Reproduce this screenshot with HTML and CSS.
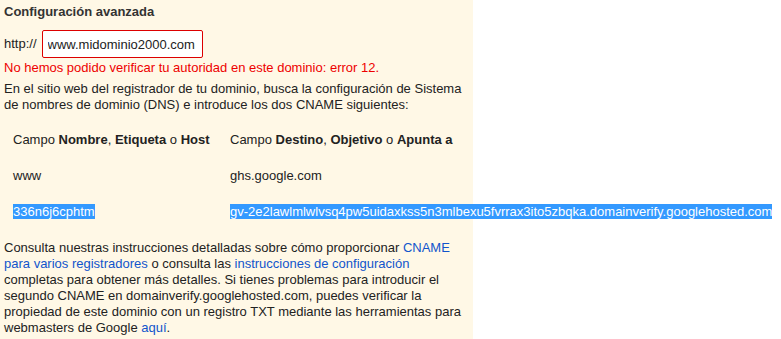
FILE: index.html
```html
<!DOCTYPE html>
<html lang="es">
<head>
    <meta charset="UTF-8">
    <title>Configuración avanzada</title>
    <link rel="stylesheet" href="styles.css">
</head>
<body>

    <div class="panel">
        <h3 class="panel-title">Configuración avanzada</h3>

        <div class="domain-row">
            <span class="prefix">http://</span>
            <input type="text" class="domain-input error" value="www.midominio2000.com">
        </div>
        <div class="error-message">No hemos podido verificar tu autoridad en este dominio: error 12.</div>

        <p class="intro">En el sitio web del registrador de tu dominio, busca la configuración de Sistema de nombres de dominio (DNS) e introduce los dos CNAME siguientes:</p>

        <!-- CNAME records -->
        <div class="cname-table">
            <div>Campo <b>Nombre</b>, <b>Etiqueta</b> o <b>Host</b></div>
            <div>Campo <b>Destino</b>, <b>Objetivo</b> o <b>Apunta a</b></div>

            <div>www</div>
            <div>ghs.google.com</div>

            <div><span class="selected">336n6j6cphtm</span></div>
            <div><span class="selected">gv-2e2lawlmlwlvsq4pw5uidaxkss5n3mlbexu5fvrrax3ito5zbqka.domainverify.googlehosted.com</span></div>
        </div>

        <p class="details">Consulta nuestras instrucciones detalladas sobre cómo proporcionar <a href="#">CNAME para varios registradores</a> o consulta las <a href="#">instrucciones de configuración</a> completas para obtener más detalles. Si tienes problemas para introducir el segundo CNAME en domainverify.googlehosted.com, puedes verificar la propiedad de este dominio con un registro TXT mediante las herramientas para webmasters de Google <a href="#">aquí</a>.</p>
    </div>

</body>
</html>
```

FILE: styles.css
```css
body {
    margin: 0;
    background: #fff;
    font-family: "Liberation Sans", Arial, sans-serif;
    font-size: 13px;
    line-height: 16px;
    color: #222;
}
.panel {
    width: 465px;
    min-height: 339px;
    padding: 4px 4px 0 4px;
    background-color: #fff8e6;
}
.panel-title {
    margin: 0;
    font-size: 13px;
    font-weight: bold;
    color: #333;
}
.domain-row {
    display: flex;
    align-items: center;
    margin-top: 10px;
}
.prefix {
    margin-right: 5px;
}
.domain-input {
    width: 161px;
    height: 28px;
    box-sizing: border-box;
    padding: 0 5px;
    border: 1px solid #ccc;
    border-radius: 2px;
    font-family: "Liberation Sans", Arial, sans-serif;
    font-size: 13px;
    color: #222;
}
.domain-input.error {
    border-color: #dd0000;
}
.error-message {
    margin-top: 2px;
    color: #ee0000;
}
.intro {
    margin: 5px 0 0 0;
}
.cname-table {
    display: grid;
    grid-template-columns: 217px max-content;
    grid-auto-rows: 36px;
    align-items: center;
    margin-top: 9px;
    padding-left: 9px;
    white-space: nowrap;
}
.selected {
    background-color: #3399ff;
    color: #fff;
}
.details {
    margin: 10px 0 0 0;
}
a {
    color: #1155cc;
    text-decoration: none;
}
```
